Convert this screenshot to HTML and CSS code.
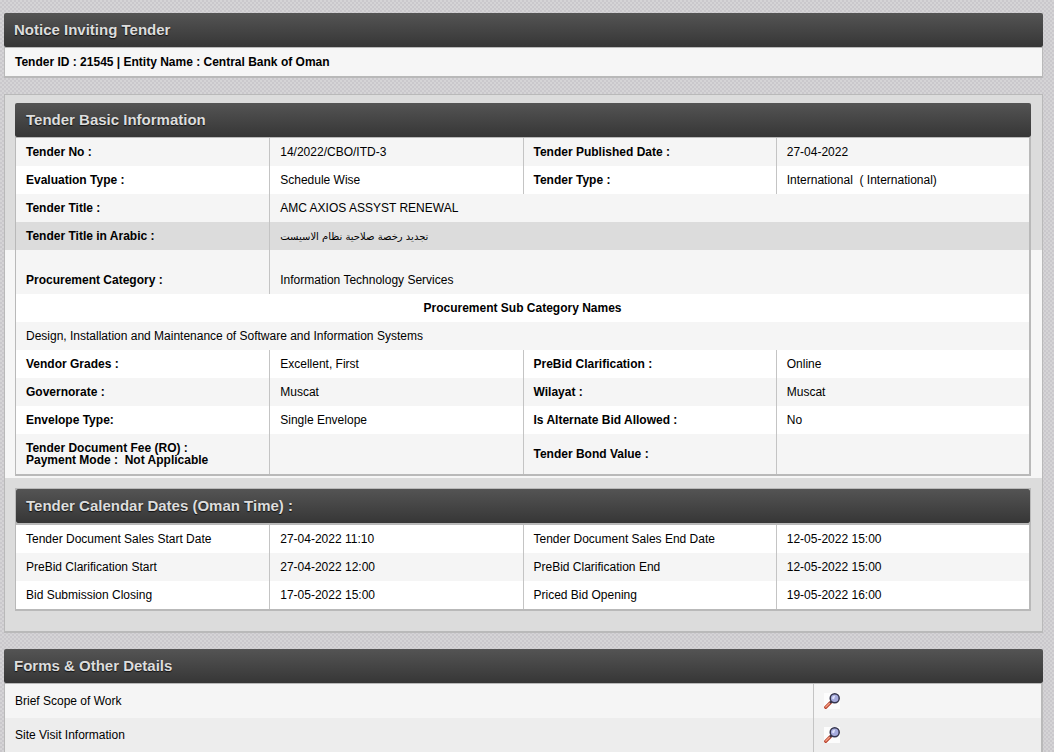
FILE: index.html
```html
<!DOCTYPE html>
<html lang="en">
<head>
<meta charset="utf-8">
<title>Notice Inviting Tender</title>
<link rel="stylesheet" href="styles.css">
</head>
<body>
<svg class="symbols" aria-hidden="true">
  <symbol id="magnifier" viewBox="0 0 16 16">
    <rect width="16" height="16" fill="#fff" fill-opacity="0.8"/>
    <path d="M1.7 14.3L6.4 9.6" stroke="#b8402c" stroke-width="3.2" stroke-linecap="round"/>
    <path d="M1.8 14L6.1 9.7" stroke="#f4a184" stroke-width="1.3" stroke-linecap="round"/>
    <path d="M6 10L7.6 8.4" stroke="#333348" stroke-width="2"/>
    <circle cx="10.7" cy="5.3" r="4.5" fill="#a6abdd" stroke="#35354d" stroke-width="1.5"/>
    <path d="M8 5.4A2.8 2.8 0 0 1 11.2 2.8L10 6.2Z" fill="#e0e3fa"/>
  </symbol>
</svg>
<main class="page">
  <section class="card">
    <h1 class="bar">Notice Inviting Tender</h1>
    <p class="summary">Tender ID : 21545 | Entity Name : Central Bank of Oman</p>
  </section>

  <section class="panel">
    <div class="band band-top">
      <h2 class="bar">Tender Basic Information</h2>
      <table class="grid">
        <colgroup><col><col><col><col></colgroup>
        <tbody>
          <tr class="alt"><th scope="row">Tender No :</th><td>14/2022/CBO/ITD-3</td><th scope="row">Tender Published Date :</th><td>27-04-2022</td></tr>
          <tr><th scope="row">Evaluation Type :</th><td>Schedule Wise</td><th scope="row">Tender Type :</th><td>International&nbsp; ( International)</td></tr>
          <tr class="alt"><th scope="row">Tender Title :</th><td colspan="3">AMC AXIOS ASSYST RENEWAL</td></tr>
          <tr class="shade"><th scope="row">Tender Title in Arabic :</th><td colspan="3"><span class="arabic" lang="ar" dir="rtl">تجديد رخصة صلاحية نظام الاسيست</span></td></tr>
        </tbody>
      </table>
    </div>
    <div class="band band-light">
      <table class="grid grid-end">
        <colgroup><col><col><col><col></colgroup>
        <tbody>
          <tr class="alt spaced"><th scope="row">Procurement Category :</th><td colspan="3">Information Technology Services</td></tr>
          <tr><th class="center" colspan="4">Procurement Sub Category Names</th></tr>
          <tr class="alt"><td colspan="4">Design, Installation and Maintenance of Software and Information Systems</td></tr>
          <tr><th scope="row">Vendor Grades :</th><td>Excellent, First</td><th scope="row">PreBid Clarification :</th><td>Online</td></tr>
          <tr class="alt"><th scope="row">Governorate :</th><td>Muscat</td><th scope="row">Wilayat :</th><td>Muscat</td></tr>
          <tr><th scope="row">Envelope Type:</th><td>Single Envelope</td><th scope="row">Is Alternate Bid Allowed :</th><td>No</td></tr>
          <tr class="alt tall"><th scope="row">Tender Document Fee (RO) :<br>Payment Mode :&nbsp; Not Applicable</th><td></td><th scope="row">Tender Bond Value :</th><td></td></tr>
        </tbody>
      </table>
    </div>
    <div class="band band-bottom">
      <div class="calendar"><h2 class="bar">Tender Calendar Dates (Oman Time) :</h2></div>
      <table class="grid grid-end">
        <colgroup><col><col><col><col></colgroup>
        <tbody>
          <tr><td>Tender Document Sales Start Date</td><td>27-04-2022 11:10</td><td>Tender Document Sales End Date</td><td>12-05-2022 15:00</td></tr>
          <tr class="alt"><td>PreBid Clarification Start</td><td>27-04-2022 12:00</td><td>PreBid Clarification End</td><td>12-05-2022 15:00</td></tr>
          <tr><td>Bid Submission Closing</td><td>17-05-2022 15:00</td><td>Priced Bid Opening</td><td>19-05-2022 16:00</td></tr>
        </tbody>
      </table>
    </div>
  </section>

  <section class="card">
    <h2 class="bar">Forms &amp; Other Details</h2>
    <table class="grid forms">
      <colgroup><col class="form-name"><col></colgroup>
      <tbody>
        <tr class="alt"><td>Brief Scope of Work</td><td><button class="view" type="button" aria-label="View Brief Scope of Work"><svg class="icon"><use href="#magnifier"/></svg></button></td></tr>
        <tr class="dim"><td>Site Visit Information</td><td><button class="view" type="button" aria-label="View Site Visit Information"><svg class="icon"><use href="#magnifier"/></svg></button></td></tr>
      </tbody>
    </table>
  </section>
</main>
</body>
</html>
```
FILE: styles.css
```css
* { box-sizing: border-box; }

body {
  margin: 0;
  color: #000;
  font: 12px/12px "Liberation Sans", Arial, sans-serif;
  background-color: #d5d4d6;
  background-image:
    conic-gradient(#cac8cc 25%, transparent 0 50%, #cac8cc 0 75%, transparent 0);
  background-size: 4px 4px;
}

.symbols { display: none; }

.page {
  display: flex;
  flex-direction: column;
  gap: 16px;
  padding: 13px 11px 0 4px;
}

.bar {
  margin: 0;
  padding: 0 10px;
  color: #ddd;
  font-size: 15px;
  line-height: 34px;
  background: linear-gradient(#545454, #363636);
  border-radius: 2px;
  text-shadow: 0 1px 1px #111;
}

.summary {
  margin: 0;
  padding: 8px 10px;
  font-weight: bold;
  background: #f6f6f6;
  border: 1px solid #b9b9b9;
  border-bottom-width: 2px;
}

.panel {
  border: 1px solid #b9b9b9;
  border-bottom-width: 2px;
}

.band {
  padding: 0 11px 0 10px;
  background: #dcdcdc;
}
.band-top { padding-top: 8px; }
.band-top .bar { padding: 0 11px; }
.band-light { background: #f6f6f6; padding-bottom: 2px; }
.band-bottom { padding-top: 10px; padding-bottom: 20px; }

.calendar {
  border: 1px solid #b9b9b9;
}

.grid {
  width: 100%;
  table-layout: fixed;
  border-collapse: separate;
  border-spacing: 0;
  border: 1px solid #b9b9b9;
  border-width: 1px 2px 0 1px;
  background: #fff;
}
.grid-end { border-width: 0 2px 2px 1px; }
.calendar + .grid-end { border-top-width: 1px; }

.grid th,
.grid td {
  height: 28px;
  padding: 0 10px;
  text-align: left;
  vertical-align: middle;
}
.grid th + td,
.grid td + th,
.grid td + td { border-left: 1px solid #c4c4c4; }

.alt { background: #f5f5f5; }
.shade { background: #dcdcdc; }
.dim { background: #ededed; }

.grid .center { text-align: center; }
.grid .spaced > * { height: 44px; padding-top: 16px; }
.grid .tall > * { height: 40px; }

.arabic {
  font-family: "DejaVu Sans", sans-serif;
  font-size: 10px;
}

.forms .form-name { width: 78%; }
.forms td { height: 34px; }

.view {
  display: block;
  padding: 0;
  border: 0;
  background: none;
  cursor: pointer;
}
.icon {
  display: block;
  width: 16px;
  height: 16px;
}
```
